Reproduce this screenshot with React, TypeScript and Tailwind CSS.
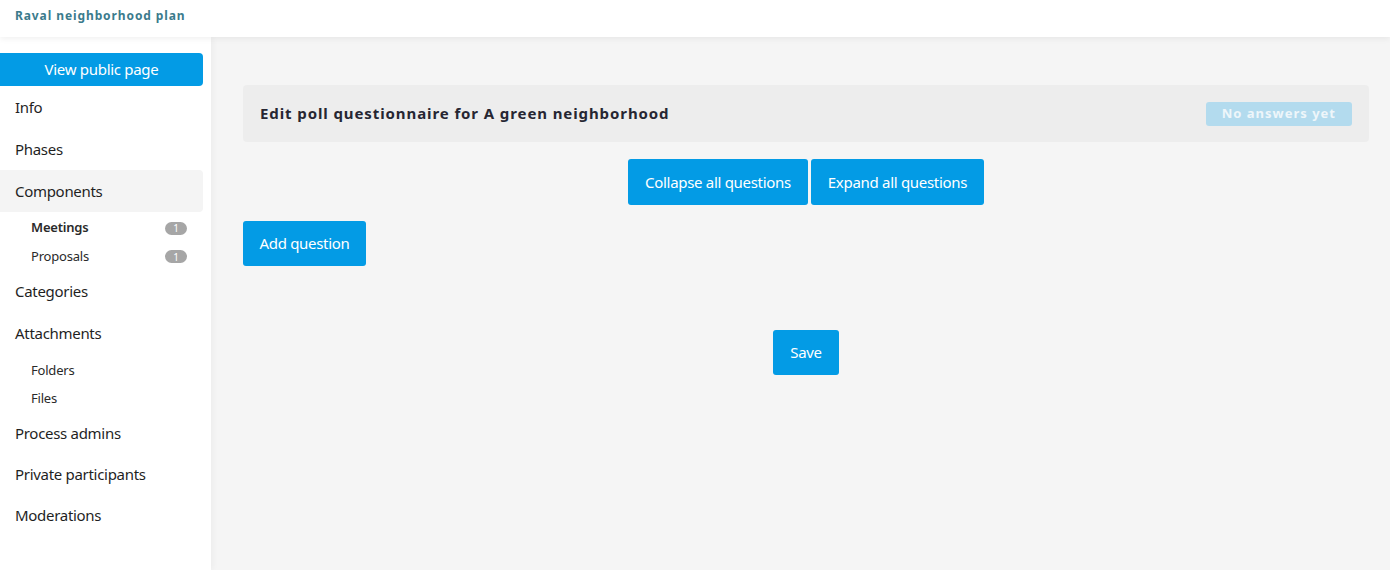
import React from "react";

const font = { fontFamily: '"Source Sans Pro", "Noto Sans", "Open Sans", Lato, sans-serif' };

function NavItem({ label, active, h = 42 }: { label: string; active?: boolean; h?: number }) {
  return (
    <div
      className={`flex items-center pl-[15px] text-[15px] tracking-[-0.3px] text-[#1f1f1f] rounded-r-[4px] mr-[8px] ${active ? "bg-[#f4f4f4]" : ""}`}
      style={{ height: h }}
    >
      {label}
    </div>
  );
}

function SubItem({ label, bold, badge, h = 29 }: { label: string; bold?: boolean; badge?: string; h?: number }) {
  return (
    <div className="flex items-center justify-between pl-[31px] pr-[24px] text-[13px] tracking-[-0.2px] text-[#2a2a2a]" style={{ height: h }}>
      <span className={bold ? "font-semibold" : ""}>{label}</span>
      {badge && (
        <span className="bg-[#a6a6a6] text-white text-[10px] rounded-full w-[22px] h-[13px] flex items-center justify-center leading-none">
          {badge}
        </span>
      )}
    </div>
  );
}

export default function App() {
  return (
    <div className="w-[1390px] h-[570px] bg-[#f5f5f5] flex flex-col overflow-hidden" style={font}>
      <header className="h-[37px] bg-white shadow-[0_2px_6px_rgba(0,0,0,0.06)] relative z-10 flex items-center pl-[15px] pb-[6px]">
        <span className="text-[12px] font-bold text-[#3b7b8c] tracking-[0.9px]">Raval neighborhood plan</span>
      </header>
      <div className="flex flex-1">
        <aside className="w-[211px] bg-white pt-[16px] shadow-[2px_0_6px_rgba(0,0,0,0.04)]">
          <button className="w-[203px] h-[33px] bg-[#039be5] text-white text-[15px] tracking-[-0.3px] rounded-r-[4px] flex items-center justify-center">
            View public page
          </button>
          <NavItem label="Info" />
          <NavItem label="Phases" />
          <NavItem label="Components" active />
          <div className="pt-[1px]">
            <SubItem label="Meetings" bold badge="1" h={30} />
            <SubItem label="Proposals" badge="1" h={27} />
          </div>
          <NavItem label="Categories" />
          <NavItem label="Attachments" />
          <div className="pt-[1px]">
            <SubItem label="Folders" h={31} />
            <SubItem label="Files" h={26} />
          </div>
          <NavItem label="Process admins" />
          <NavItem label="Private participants" h={41} />
          <NavItem label="Moderations" h={41} />
        </aside>
        <main className="flex-1 pl-[32px] pr-[21px] pt-[48px]">
          <div className="h-[57px] bg-[#ededed] rounded-[4px] flex items-center justify-between pl-[17px] pr-[17px]">
            <h2 className="text-[15px] font-bold tracking-[0.9px] text-[#262632]">
              Edit poll questionnaire for A green neighborhood
            </h2>
            <span className="h-[24px] px-[16px] bg-[#b3dbee] text-[#eef6fa] text-[13px] font-bold tracking-[1px] rounded-[3px] flex items-center">
              No answers yet
            </span>
          </div>
          <div className="flex justify-center gap-[3px] mt-[17px] tracking-[-0.3px]">
            <button className="h-[46px] w-[180px] bg-[#039be5] text-white text-[15px] rounded-[3px]">Collapse all questions</button>
            <button className="h-[46px] w-[173px] bg-[#039be5] text-white text-[15px] rounded-[3px]">Expand all questions</button>
          </div>
          <div className="mt-[16px] tracking-[-0.3px]">
            <button className="h-[45px] w-[123px] bg-[#039be5] text-white text-[15px] rounded-[3px]">Add question</button>
          </div>
          <div className="flex justify-center mt-[64px] tracking-[-0.3px]">
            <button className="h-[45px] w-[66px] bg-[#039be5] text-white text-[15px] rounded-[3px]">Save</button>
          </div>
        </main>
      </div>
    </div>
  );
}
